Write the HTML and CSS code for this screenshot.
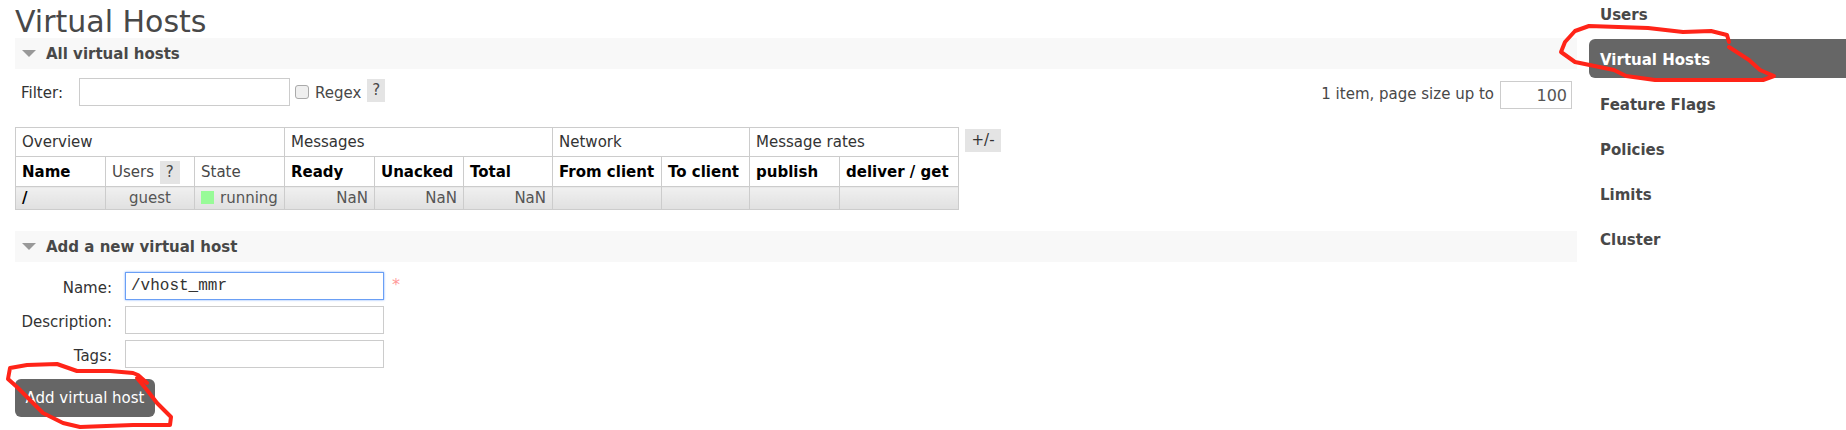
FILE: index.html
```html
<!DOCTYPE html>
<html lang="en">
<head>
    <meta charset="UTF-8">
    <title>Virtual Hosts</title>
    <link rel="stylesheet" href="styles.css">
</head>
<body>
    <div class="page">
        <div class="main">
            <h1>Virtual Hosts</h1>

            <!-- Listado -->
            <div class="section-head"><span class="arrow"></span><h2>All virtual hosts</h2></div>
            <div class="filter-row">
                <div class="filter">
                    <label class="filter-label">Filter:</label>
                    <input type="text" class="filter-input">
                    <input type="checkbox" class="regex-check">
                    <span class="regex">Regex</span>
                    <span class="help">?</span>
                </div>
                <div class="paging">
                    <span>1 item, page size up to</span>
                    <input type="text" class="page-size" value="100">
                </div>
            </div>

            <div class="table-row">
                <table class="list">
                    <colgroup>
                        <col class="c90"><col class="c89"><col class="c90"><col class="c90"><col class="c89"><col class="c89">
                        <col class="c109"><col class="c88"><col class="c90"><col class="c119">
                    </colgroup>
                    <thead>
                        <tr class="group">
                            <th colspan="3">Overview</th>
                            <th colspan="3">Messages</th>
                            <th colspan="2">Network</th>
                            <th colspan="2">Message rates</th>
                        </tr>
                        <tr class="cols">
                            <th class="strong">Name</th>
                            <th>Users <span class="help help-small">?</span></th>
                            <th>State</th>
                            <th class="strong">Ready</th>
                            <th class="strong">Unacked</th>
                            <th class="strong">Total</th>
                            <th class="strong">From client</th>
                            <th class="strong">To client</th>
                            <th class="strong">publish</th>
                            <th class="strong">deliver / get</th>
                        </tr>
                    </thead>
                    <tbody>
                        <tr>
                            <td class="strong">/</td>
                            <td class="center">guest</td>
                            <td><span class="state"></span>running</td>
                            <td class="num">NaN</td>
                            <td class="num">NaN</td>
                            <td class="num">NaN</td>
                            <td></td>
                            <td></td>
                            <td></td>
                            <td></td>
                        </tr>
                    </tbody>
                </table>
                <span class="plus-minus">+/-</span>
            </div>

            <!-- Formulario -->
            <div class="section-head section-add"><span class="arrow"></span><h2>Add a new virtual host</h2></div>
            <form class="add-form">
                <div class="form-row">
                    <label>Name:</label>
                    <input type="text" class="text-input focused" value="/vhost_mmr">
                    <span class="required">*</span>
                </div>
                <div class="form-row">
                    <label>Description:</label>
                    <input type="text" class="text-input">
                </div>
                <div class="form-row">
                    <label>Tags:</label>
                    <input type="text" class="text-input">
                </div>
                <button type="button" class="add-btn">Add virtual host</button>
            </form>
        </div>

        <ul class="nav">
            <li>Users</li>
            <li class="active">Virtual Hosts</li>
            <li>Feature Flags</li>
            <li>Policies</li>
            <li>Limits</li>
            <li>Cluster</li>
        </ul>
    </div>

    <!-- Marcas a mano alzada sobre la captura -->
    <svg class="scribble" width="1846" height="430" viewBox="0 0 1846 430">
        <path d="M147 383 L138 375 L133 373 L110 371 L77 371 L57 364 L27 365 L10 368 L8 379 L17 387 L27 397 L43 413 L63 423 L80 427 L133 425 L170 425 L171 417 L157 403 L147 390 L137 378"/>
        <path d="M1729 42 L1727 35 L1711 31 L1683 32 L1648 28 L1589 26 L1575 31 L1565 42 L1561 52 L1575 62 L1614 70 L1626 76 L1655 80 L1763 80 L1774 76 L1760 70 L1749 60 L1729 47"/>
    </svg>
</body>
</html>
```

FILE: styles.css
```css
body {
    margin: 0;
    font-family: "DejaVu Sans", Verdana, sans-serif;
    font-size: 15px;
    color: #484848;
    background-color: #ffffff;
    overflow: hidden;
}

.page {
    display: flex;
    align-items: flex-start;
}

.main {
    width: 1562px;
    margin-left: 15px;
    flex-shrink: 0;
}

h1 {
    margin: 0;
    height: 38px;
    font-size: 30px;
    line-height: 44px;
    font-weight: normal;
}

h2 {
    margin: 0;
    font-size: 15px;
    font-weight: bold;
}

.section-head {
    display: flex;
    align-items: center;
    height: 31px;
    background-color: #f8f8f8;
}

.arrow {
    width: 0;
    height: 0;
    margin: 0 10px 0 7px;
    border-left: 7px solid transparent;
    border-right: 7px solid transparent;
    border-top: 7px solid #999999;
}

.filter-row {
    display: flex;
    justify-content: space-between;
    height: 58px;
    padding-top: 9px;
    box-sizing: border-box;
}

.filter {
    display: flex;
    align-items: flex-start;
}

.filter-label {
    margin: 6px 0 0 6px;
    color: #333333;
    width: 58px;
}

input[type="text"] {
    box-sizing: border-box;
    height: 28px;
    border: 1px solid #cccccc;
    background-color: #ffffff;
    font-family: "Liberation Mono", monospace;
    font-size: 16px;
    color: #333333;
    outline: none;
}

.filter-input {
    width: 211px;
    margin-top: 0;
}

.regex-check {
    appearance: none;
    box-sizing: border-box;
    width: 14px;
    height: 14px;
    margin: 7px 6px 0 5px;
    border: 1px solid #aaaaaa;
    border-radius: 3px;
    background-color: #efefef;
}

.regex {
    margin-top: 6px;
}

.help {
    display: inline-block;
    margin: 1px 0 0 6px;
    padding: 0 5px;
    height: 23px;
    line-height: 23px;
    background-color: #e4e4e4;
}

.help-small {
    margin: 0 0 0 1px;
    padding: 0 6px;
}

.paging {
    display: flex;
    align-items: flex-start;
    padding-right: 5px;
    padding-top: 3px;
}

.paging span {
    margin: 4px 6px 0 0;
}

.page-size {
    width: 72px;
    text-align: right;
    padding-right: 4px;
    font-family: "DejaVu Sans", sans-serif !important;
    color: #555555 !important;
}

.table-row {
    display: flex;
    align-items: flex-start;
    height: 104px;
}

table.list {
    border-collapse: collapse;
    table-layout: fixed;
    width: 944px;
    color: #484848;
}

col.c90 { width: 90px; }
col.c89 { width: 89px; }
col.c88 { width: 88px; }
col.c109 { width: 109px; }
col.c119 { width: 119px; }

table.list th,
table.list td {
    border: 1px solid #cccccc;
    padding: 0 6px;
    text-align: left;
    font-weight: normal;
    white-space: nowrap;
}

table.list tr.group th {
    height: 28px;
    color: #333333;
}

table.list tr.cols th {
    height: 28px;
    padding-top: 1px;
}

table.list td {
    height: 22px;
    background: linear-gradient(to bottom, #f0f0f0, #e0e0e0);
    color: #555555;
}

table.list .strong {
    font-weight: bold;
    color: #000000;
}

table.list .center {
    text-align: center;
}

table.list .num {
    text-align: right;
}

.state {
    display: inline-block;
    width: 13px;
    height: 13px;
    margin: 0 6px -1px 0;
    background-color: #98fb98;
}

.plus-minus {
    margin: 2px 0 0 6px;
    width: 36px;
    height: 23px;
    line-height: 23px;
    text-align: center;
    background-color: #e4e4e4;
    color: #333333;
}

.add-form {
    padding-top: 10px;
}

.form-row {
    display: flex;
    align-items: flex-start;
    height: 34px;
}

.form-row label {
    width: 97px;
    margin-top: 7px;
    text-align: right;
    color: #333333;
}

.text-input {
    width: 259px;
    margin-left: 13px;
    padding-left: 5px;
}

.focused {
    border: 1px solid #6a9ff5 !important;
    box-shadow: 0 0 2px #7aacfe;
}

.required {
    margin: 3px 0 0 8px;
    font-size: 16px;
    color: #ff9999;
}

.add-btn {
    display: block;
    margin-top: 5px;
    width: 140px;
    height: 38px;
    padding: 0;
    border: none;
    border-radius: 6px;
    background-color: #666666;
    color: #ffffff;
    font-family: "DejaVu Sans", Verdana, sans-serif;
    font-size: 15px;
}

.nav {
    list-style: none;
    margin: -6px 0 0 12px;
    padding: 0;
    flex: 1;
}

.nav li {
    height: 39px;
    line-height: 43px;
    margin-bottom: 6px;
    padding-left: 11px;
    font-weight: bold;
    color: #484848;
}

.nav li.active {
    background-color: #666666;
    color: #ffffff;
    border-radius: 6px 0 0 6px;
}

.scribble {
    position: absolute;
    left: 0;
    top: 0;
    pointer-events: none;
}

.scribble path {
    fill: none;
    stroke: #ff2418;
    stroke-width: 4;
    stroke-linejoin: round;
    stroke-linecap: round;
}
```
